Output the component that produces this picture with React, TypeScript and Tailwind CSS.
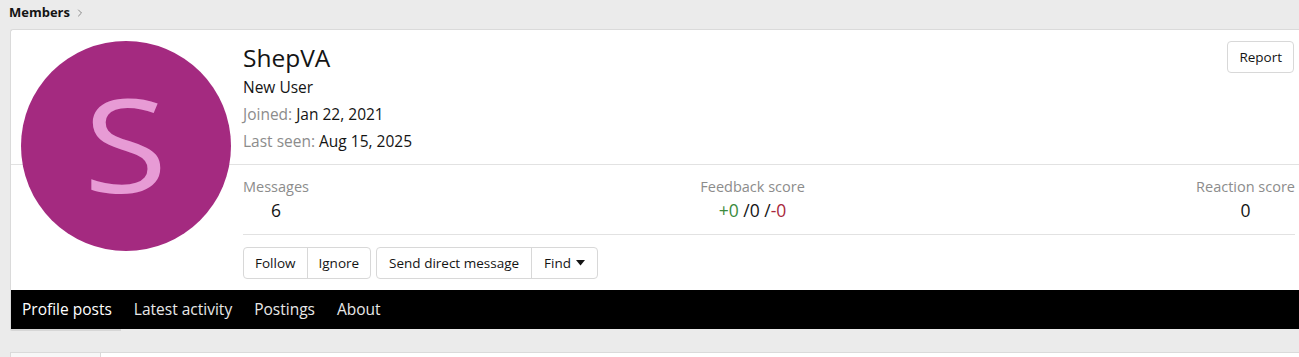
import { ChevronRight } from "lucide-react"

const font = { fontFamily: "'Open Sans', 'Noto Sans', sans-serif" }

const tabs = ["Profile posts", "Latest activity", "Postings", "About"]

function Btn({ children, className = "" }: { children: React.ReactNode; className?: string }) {
  return (
    <span className={"flex h-full items-center px-[11px] text-[13.5px] text-[#141414] " + className}>{children}</span>
  )
}

export default function App() {
  return (
    <div className="min-h-[357px] overflow-hidden bg-[#ebebeb]" style={font}>
      {/* breadcrumb */}
      <div className="flex h-[29px] items-center pl-[9px] pb-[3px]">
        <span className="text-[13px] font-bold text-[#141414]">Members</span>
        <ChevronRight className="ml-[4px] h-[12px] w-[12px] text-[#8a8a8a]" strokeWidth={2} />
      </div>

      <div className="pl-[10px]">
        <div className="relative rounded-tl-[3px] border-l border-t border-[#dadada] bg-white">
          {/* avatar */}
          <div className="absolute left-[10px] top-[11px] flex h-[210px] w-[210px] items-center justify-center rounded-full bg-[#a42a80]">
            <span className="-mt-[6px] scale-x-[1.18] text-[130px] leading-none text-[#e79bd5]">S</span>
          </div>

          {/* header */}
          <div className="border-b border-[#e2e2e2] pl-[232px] pr-[5px] pt-[11px] pb-[9px]">
            <div className="flex items-start justify-between">
              <div>
                <div className="text-[24.5px] leading-[33px] text-[#141414]">ShepVA</div>
                <div className="text-[15.5px] leading-[27px] text-[#141414]">New User</div>
                <div className="text-[15.5px] leading-[27px] text-[#141414]">
                  <span className="text-[#8c8c8c]">Joined:</span> Jan 22, 2021
                </div>
                <div className="text-[15.5px] leading-[27px] text-[#141414]">
                  <span className="text-[#8c8c8c]">Last seen:</span> Aug 15, 2025
                </div>
              </div>
              <div className="flex h-[32px] items-center rounded-[4px] border border-[#d8d8d8] bg-white">
                <Btn>Report</Btn>
              </div>
            </div>
          </div>

          {/* stats */}
          <div className="pl-[232px] pr-[4px]">
            <div className="flex justify-between border-b border-[#e2e2e2] pt-[12px] pb-[11px]">
              <div className="text-center">
                <div className="text-[14.5px] leading-[20px] text-[#8c8c8c]">Messages</div>
                <div className="text-[17.5px] leading-[26px] text-[#141414]">6</div>
              </div>
              <div className="text-center">
                <div className="text-[14.5px] leading-[20px] text-[#8c8c8c]">Feedback score</div>
                <div className="text-[17.5px] leading-[26px] text-[#141414]">
                  <span className="text-[#3c8b3c]">+0</span> /0 /<span className="text-[#a8283c]">-0</span>
                </div>
              </div>
              <div className="text-center">
                <div className="text-[14.5px] leading-[20px] text-[#8c8c8c]">Reaction score</div>
                <div className="text-[17.5px] leading-[26px] text-[#141414]">0</div>
              </div>
            </div>

            {/* buttons */}
            <div className="flex gap-[5px] pt-[12px] pb-[11px]">
              <div className="flex h-[32px] rounded-[4px] border border-[#d8d8d8]">
                <Btn>Follow</Btn>
                <Btn className="border-l border-[#d8d8d8]">Ignore</Btn>
              </div>
              <div className="flex h-[32px] rounded-[4px] border border-[#d8d8d8]">
                <Btn className="px-[12px]">Send direct message</Btn>
                <Btn className="border-l border-[#d8d8d8] px-[12px]">
                  Find
                  <svg className="ml-[5px]" width="9" height="6" viewBox="0 0 9 6">
                    <path d="M0 0h9L4.5 5.5z" fill="#141414" />
                  </svg>
                </Btn>
              </div>
            </div>
          </div>

          {/* tabs */}
          <div className="flex h-[39px] bg-black">
            {tabs.map((t, i) => (
              <div
                key={t}
                className={
                  "flex items-center px-[11px] text-[15.5px] " + (i === 0 ? "text-white" : "text-[#e8e8e8]")
                }
              >
                {t}
              </div>
            ))}
          </div>
        </div>
        <div className="h-[2px] w-[111px] rounded-bl-[3px] bg-[#d6d6d6]" />

        {/* next block */}
        <div className="mt-[21px] flex h-[10px]">
          <div className="w-[90px] border-l border-t border-[#dadada] bg-[#f7f7f7]" />
          <div className="flex-1 border-l border-t border-[#dadada] bg-white" />
        </div>
      </div>
    </div>
  )
}
